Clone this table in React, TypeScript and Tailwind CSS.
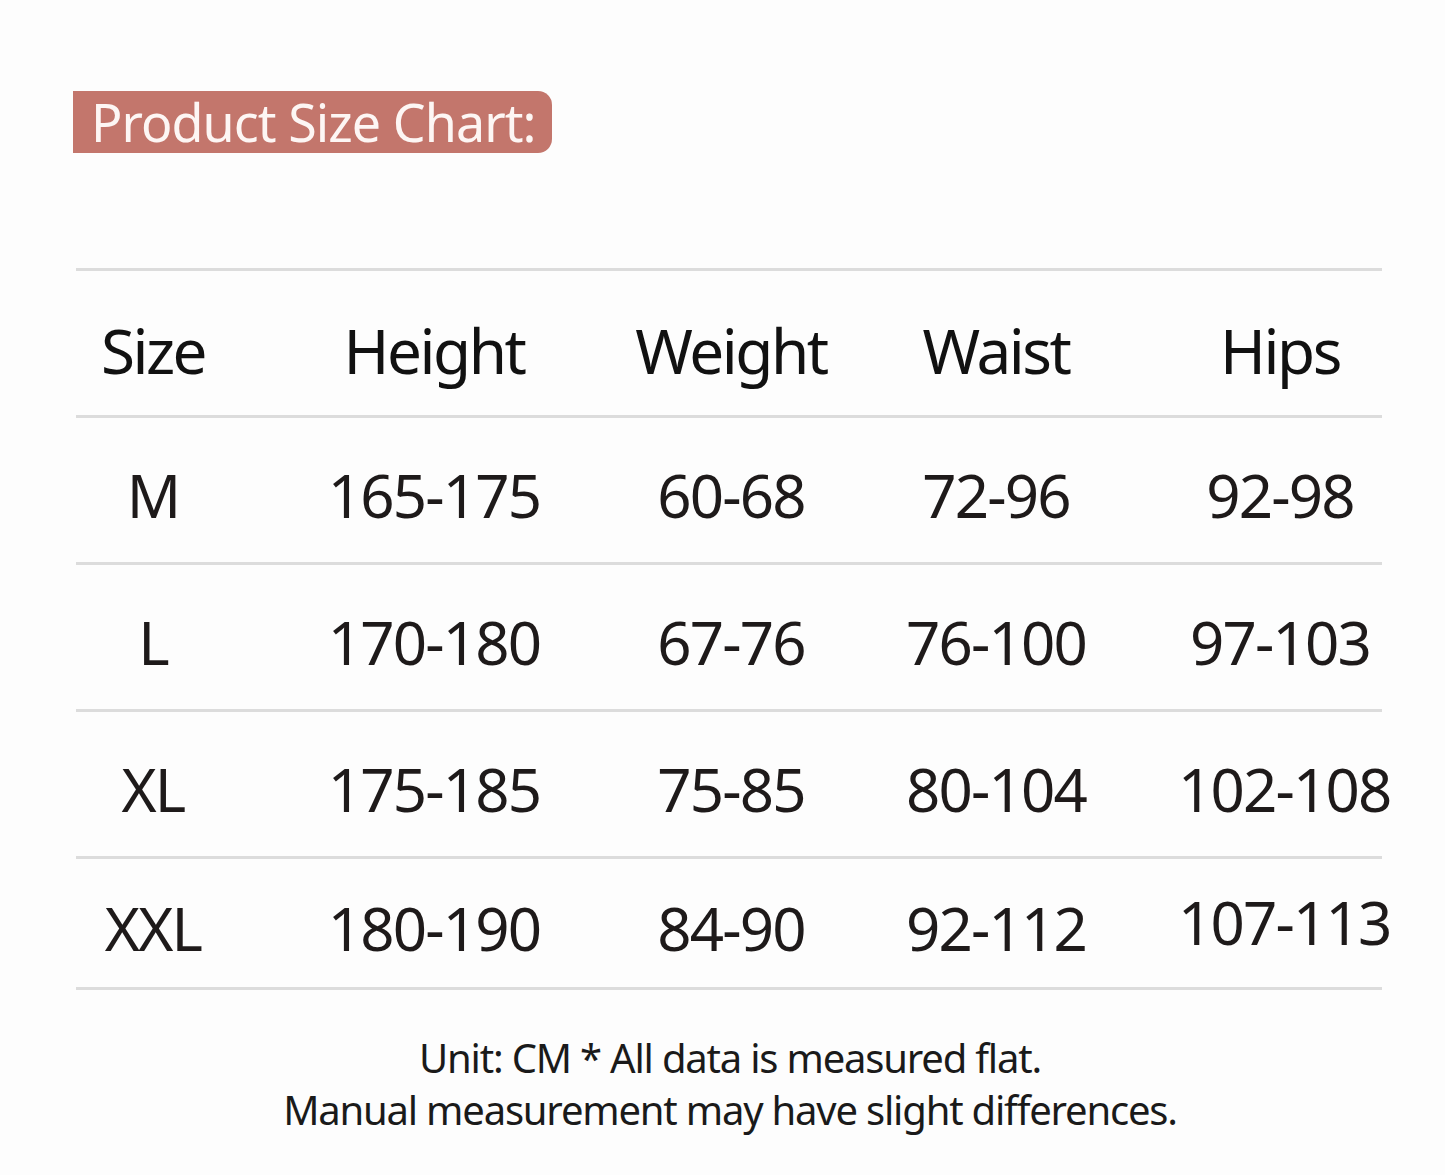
const rows = [
  ['M', '165-175', '60-68', '72-96', '92-98'],
  ['L', '170-180', '67-76', '76-100', '97-103'],
  ['XL', '175-185', '75-85', '80-104', '102-108'],
  ['XXL', '180-190', '84-90', '92-112', '107-113'],
];

const heads = ['Size', 'Height', 'Weight', 'Waist', 'Hips'];

function Row({ cells, head, last }: { cells: string[]; head?: boolean; last?: boolean }) {
  return (
    <div
      className={`grid grid-cols-[154px_408px_186px_344px_1fr] items-center border-b-[3px] border-[#dcdcdc] ${
        last ? 'h-[131px]' : 'h-[147px]'
      } ${head ? 'text-[#111111]' : 'text-[#1e1a1a]'}`}
    >
      {cells.map((c, i) => (
        <div
          key={i}
          className={`flex justify-center whitespace-nowrap leading-none ${
            head ? 'pt-[14px] text-[62px] tracking-[-0.04em]' : 'pt-[10px] text-[60px] tracking-[-0.03em]'
          } ${i === 4 ? 'pl-[10px]' : ''} ${last && i === 4 ? '-mt-[12px]' : ''}`}
        >
          {c}
        </div>
      ))}
    </div>
  );
}

export default function App() {
  return (
    <div className="min-h-[1175px] w-[1445px] bg-[#fdfdfd] font-['Noto_Sans',sans-serif] pt-[91px]">
      {/* 标题 */}
      <div className="ml-[73px] flex h-[62px] w-[479px] items-center rounded-r-[14px] bg-[#c3766c] pl-[18px]">
        <span className="text-[52px] leading-none tracking-[-0.018em] text-[#fdf6f4]">Product Size Chart:</span>
      </div>

      {/* 尺码表 */}
      <div className="mx-[76px] mt-[115px] w-[1306px] border-t-[3px] border-[#dcdcdc]">
        <Row cells={heads} head />
        {rows.map((r, i) => (
          <Row key={i} cells={r} last={i === rows.length - 1} />
        ))}
      </div>

      {/* 说明 */}
      <div className="mt-[42px] flex flex-col items-center pl-[15px] text-[40px] leading-[52px] tracking-[-0.03em] text-[#1a1a1a]">
        <p>Unit: CM * All data is measured flat.</p>
        <p>Manual measurement may have slight differences.</p>
      </div>
    </div>
  );
}
